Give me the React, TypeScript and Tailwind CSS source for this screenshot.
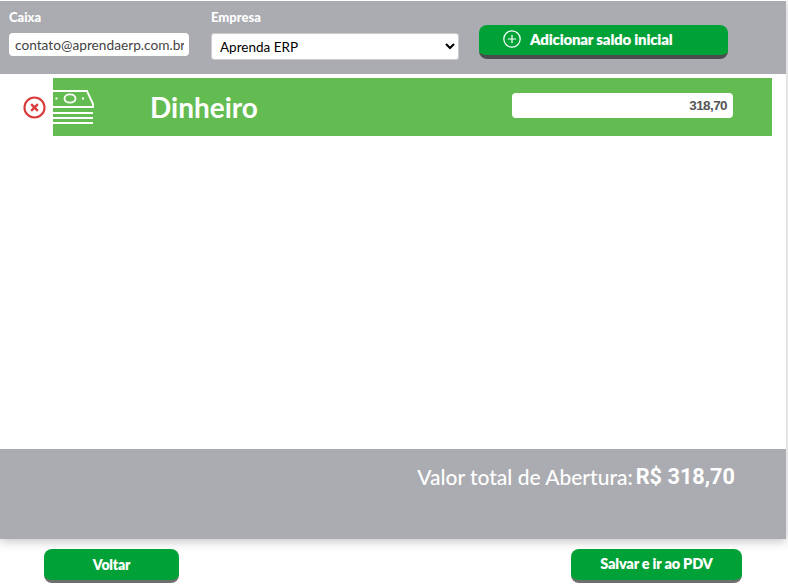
import React from 'react';

const FONT = "font-['Lato','Open_Sans',sans-serif]";

const GreenButton: React.FC<{ className?: string; children: React.ReactNode }> = ({ className = '', children }) => (
  <button
    type="button"
    className={`flex items-center justify-center rounded-[8px] bg-[#00a237] text-white font-extrabold tracking-[-0.2px] ${className}`}
  >
    {children}
  </button>
);

const MoneyIcon = () => (
  <svg width="42" height="36" viewBox="0 0 42 36" fill="none" stroke="#fff" strokeWidth="1.8" className="shrink-0">
    <path d="M0 2H34L40 15V18H0" />
    <ellipse cx="17" cy="9.5" rx="5.5" ry="4.2" />
    <path d="M2.5 9.5H4.5M29 9.5H31" strokeWidth="2.2" />
    <path d="M0 24H40M0 29H40M0 34H40" strokeWidth="1.8" />
  </svg>
);

export default function App() {
  return (
    <div className={`${FONT} w-[788px] h-[586px] bg-white overflow-hidden`}>
      <div className="w-[786px] h-[539px] flex flex-col shadow-[0_2px_10px_rgba(0,0,0,0.25)]">
        {/* Header */}
        <div className="mt-px h-[73px] bg-[#abacb1] flex items-start pl-[9px]">
          <div className="w-[180px] pt-[9px]">
            <div className="text-[13px] leading-[14px] font-black text-white">Caixa</div>
            <div className="mt-[9px] h-[23px] rounded-[4px] bg-white pl-[6px] pr-[5px] text-[13.7px] leading-[23px] text-[#444]">
              <div className="overflow-hidden whitespace-nowrap">contato@aprendaerp.com.br</div>
            </div>
          </div>
          <div className="w-[248px] ml-[22px] pt-[9px]">
            <div className="text-[13px] leading-[14px] font-black text-white">Empresa</div>
            <select className="mt-[9px] w-full h-[27px] rounded-[3px] bg-white border border-[#ccc] pl-[4px] text-[13.5px] text-black appearance-auto">
              <option>Aprenda ERP</option>
            </select>
          </div>
          <GreenButton className="w-[249px] h-[34px] ml-[20px] mt-[24px] border-b-[4px] border-[#4a4d4d] !justify-start pl-[24px] gap-[9px] text-[15px] leading-[26px] pb-[2px]">
            <svg width="18" height="18" viewBox="0 0 18 18" fill="none" stroke="#fff" strokeWidth="1.2">
              <circle cx="9" cy="9" r="8.2" />
              <path d="M9 4.8V13.2M4.8 9H13.2" />
            </svg>
            Adicionar saldo inicial
          </GreenButton>
        </div>

        {/* Formas de pagamento */}
        <div className="flex-1 pt-[4px]">
          <div className="flex items-center h-[58px]">
            <div className="w-[53px] flex justify-end pr-[7px]">
              <svg width="23" height="23" viewBox="0 0 22 22" fill="none" stroke="#d93a3a">
                <circle cx="11" cy="11" r="9.6" strokeWidth="2" />
                <path d="M7.8 7.8L14.2 14.2M14.2 7.8L7.8 14.2" strokeWidth="2.2" />
              </svg>
            </div>
            <div className="w-[719px] h-full bg-[#63bc52] flex items-center">
              <MoneyIcon />
              <span className="ml-[55px] text-[28px] font-bold text-white">Dinheiro</span>
              <div className="ml-auto mb-[3px] mr-[39px] w-[221px] h-[25px] rounded-[4px] bg-white text-right pr-[6px] font-['Liberation_Sans',sans-serif] font-bold text-[13.5px] leading-[25px] tracking-[-0.6px] text-[#555]">
                318,70
              </div>
            </div>
          </div>
        </div>

        {/* Total */}
        <div className="h-[90px] bg-[#abacb1] flex items-start justify-end pr-[51px] pt-[15px] text-white">
          <span className="text-[21px] leading-[26px] font-medium">Valor total de Abertura:</span>
          <span className="ml-[3px] text-[21.7px] leading-[26px] font-bold font-['Roboto',sans-serif]">R$ 318,70</span>
        </div>
      </div>

      {/* Footer */}
      <div className="flex justify-between pl-[44px] pr-[46px] pt-[10px]">
        <GreenButton className="w-[135px] h-[34px] border-b-[3px] border-[#6d6f6f] text-[14px] pb-px">Voltar</GreenButton>
        <GreenButton className="w-[171px] h-[34px] border-b-[3px] border-[#6d6f6f] text-[14.5px] pb-px">Salvar e ir ao PDV</GreenButton>
      </div>
    </div>
  );
}
